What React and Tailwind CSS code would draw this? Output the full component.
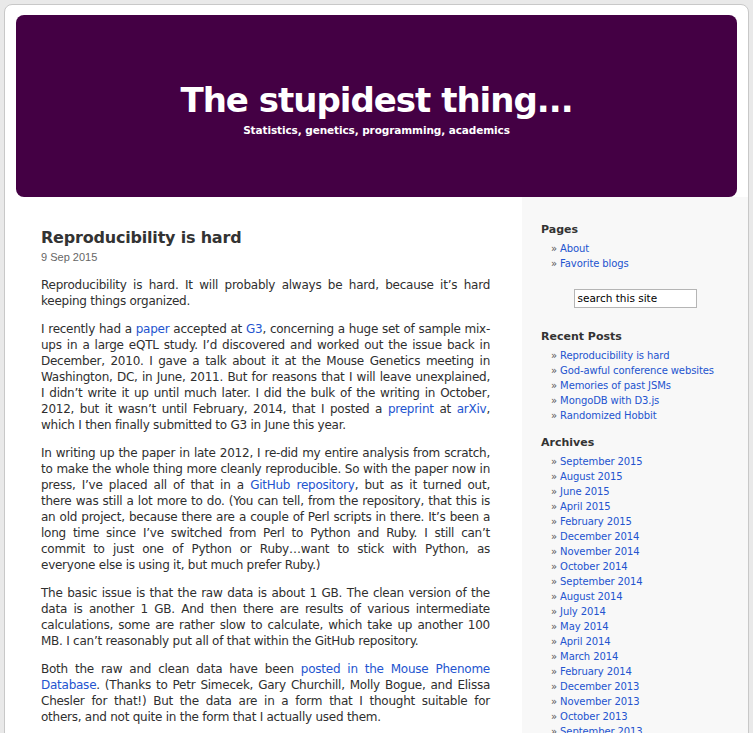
const link = "text-[#2354cf]";

function L({ children, last }) {
  return (
    <span className={last ? "block" : "block [text-align-last:justify]"}>
      {children}
    </span>
  );
}

function Para({ lines }) {
  return (
    <p className="mb-3 text-justify">
      {lines.map((line, i) => (
        <L key={i} last={i === lines.length - 1}>
          {line}
        </L>
      ))}
    </p>
  );
}

const paragraphs = [
  [
    "Reproducibility is hard. It will probably always be hard, because it’s hard",
    "keeping things organized.",
  ],
  [
    <>
      I recently had a <a className={link}>paper</a> accepted at <a className={link}>G3</a>, concerning a huge set of sample mix-
    </>,
    "ups in a large eQTL study. I’d discovered and worked out the issue back in",
    "December, 2010. I gave a talk about it at the Mouse Genetics meeting in",
    "Washington, DC, in June, 2011. But for reasons that I will leave unexplained,",
    "I didn’t write it up until much later. I did the bulk of the writing in October,",
    <>
      2012, but it wasn’t until February, 2014, that I posted a <a className={link}>preprint</a> at <a className={link}>arXiv</a>,
    </>,
    "which I then finally submitted to G3 in June this year.",
  ],
  [
    "In writing up the paper in late 2012, I re-did my entire analysis from scratch,",
    "to make the whole thing more cleanly reproducible. So with the paper now in",
    <>
      press, I’ve placed all of that in a <a className={link}>GitHub repository</a>, but as it turned out,
    </>,
    "there was still a lot more to do. (You can tell, from the repository, that this is",
    "an old project, because there are a couple of Perl scripts in there. It’s been a",
    "long time since I’ve switched from Perl to Python and Ruby. I still can’t",
    "commit to just one of Python or Ruby…want to stick with Python, as",
    "everyone else is using it, but much prefer Ruby.)",
  ],
  [
    "The basic issue is that the raw data is about 1 GB. The clean version of the",
    "data is another 1 GB. And then there are results of various intermediate",
    "calculations, some are rather slow to calculate, which take up another 100",
    "MB. I can’t reasonably put all of that within the GitHub repository.",
  ],
  [
    <>
      Both the raw and clean data have been <a className={link}>posted in the Mouse Phenome</a>
    </>,
    <>
      <a className={link}>Database</a>. (Thanks to Petr Simecek, Gary Churchill, Molly Bogue, and Elissa
    </>,
    "Chesler for that!) But the data are in a form that I thought suitable for",
    "others, and not quite in the form that I actually used them.",
  ],
];

const pages = ["About", "Favorite blogs"];
const recent = [
  "Reproducibility is hard",
  "God-awful conference websites",
  "Memories of past JSMs",
  "MongoDB with D3.js",
  "Randomized Hobbit",
];
const archives = [
  "September 2015",
  "August 2015",
  "June 2015",
  "April 2015",
  "February 2015",
  "December 2014",
  "November 2014",
  "October 2014",
  "September 2014",
  "August 2014",
  "July 2014",
  "May 2014",
  "April 2014",
  "March 2014",
  "February 2014",
  "December 2013",
  "November 2013",
  "October 2013",
  "September 2013",
];

function SideList({ items }) {
  return (
    <ul className="mt-[4px] pl-[10px] text-[10px] leading-[15px] tracking-[-0.1px]">
      {items.map((t) => (
        <li key={t}>
          <span className="text-[#555]">» </span>
          <a className={link}>{t}</a>
        </li>
      ))}
    </ul>
  );
}

export default function App() {
  return (
    <div className="min-h-screen bg-[#e9e9e9] p-[4px] font-['DejaVu_Sans',sans-serif] text-[#2f2f2f]">
      <div className="w-[745px] overflow-hidden rounded-lg border border-[#c8c8c8] bg-white">
        <header className="mx-[11px] mt-[10px] h-[182px] rounded-lg bg-[#440044] pt-[65px] text-center text-white">
          <h1 className="text-[34px] font-bold leading-[40px] tracking-[-1px]">
            The stupidest thing...
          </h1>
          <p className="mt-[3px] text-[10.5px] font-bold leading-[14px] tracking-[-0.1px]">
            Statistics, genetics, programming, academics
          </p>
        </header>

        <div className="flex">
          <main className="w-[517px] pl-[36px] pt-[31px]">
            <div className="w-[449px]">
              <h2 className="text-[16px] font-bold leading-[20px] tracking-[-0.2px] text-[#333]">
                Reproducibility is hard
              </h2>
              <div className="mt-[2px] mb-[13px] font-['Liberation_Sans',sans-serif] text-[11px] leading-[14px] text-[#666]">
                9 Sep 2015
              </div>
              <div className="text-[12px] leading-[16px] tracking-[-0.25px]">
                {paragraphs.map((lines, i) => (
                  <Para key={i} lines={lines} />
                ))}
              </div>
            </div>
          </main>

          <aside className="w-[226px] bg-[#f8f8f8] pl-[19px] pt-[26px] pb-6">
            <h3 className="text-[11px] font-bold leading-[14px] text-[#333]">Pages</h3>
            <SideList items={pages} />

            <div className="mt-[18px] flex justify-center pr-[19px]">
              <div className="h-[19px] w-[123px] border border-[#b5b5b5] bg-white pl-[3px] text-[10.5px] leading-[17px] text-black">
                search this site
              </div>
            </div>

            <h3 className="mt-[22px] text-[11px] font-bold leading-[14px] text-[#333]">Recent Posts</h3>
            <SideList items={recent} />

            <h3 className="mt-[13px] text-[11px] font-bold leading-[14px] text-[#333]">Archives</h3>
            <SideList items={archives} />
          </aside>
        </div>
      </div>
    </div>
  );
}
